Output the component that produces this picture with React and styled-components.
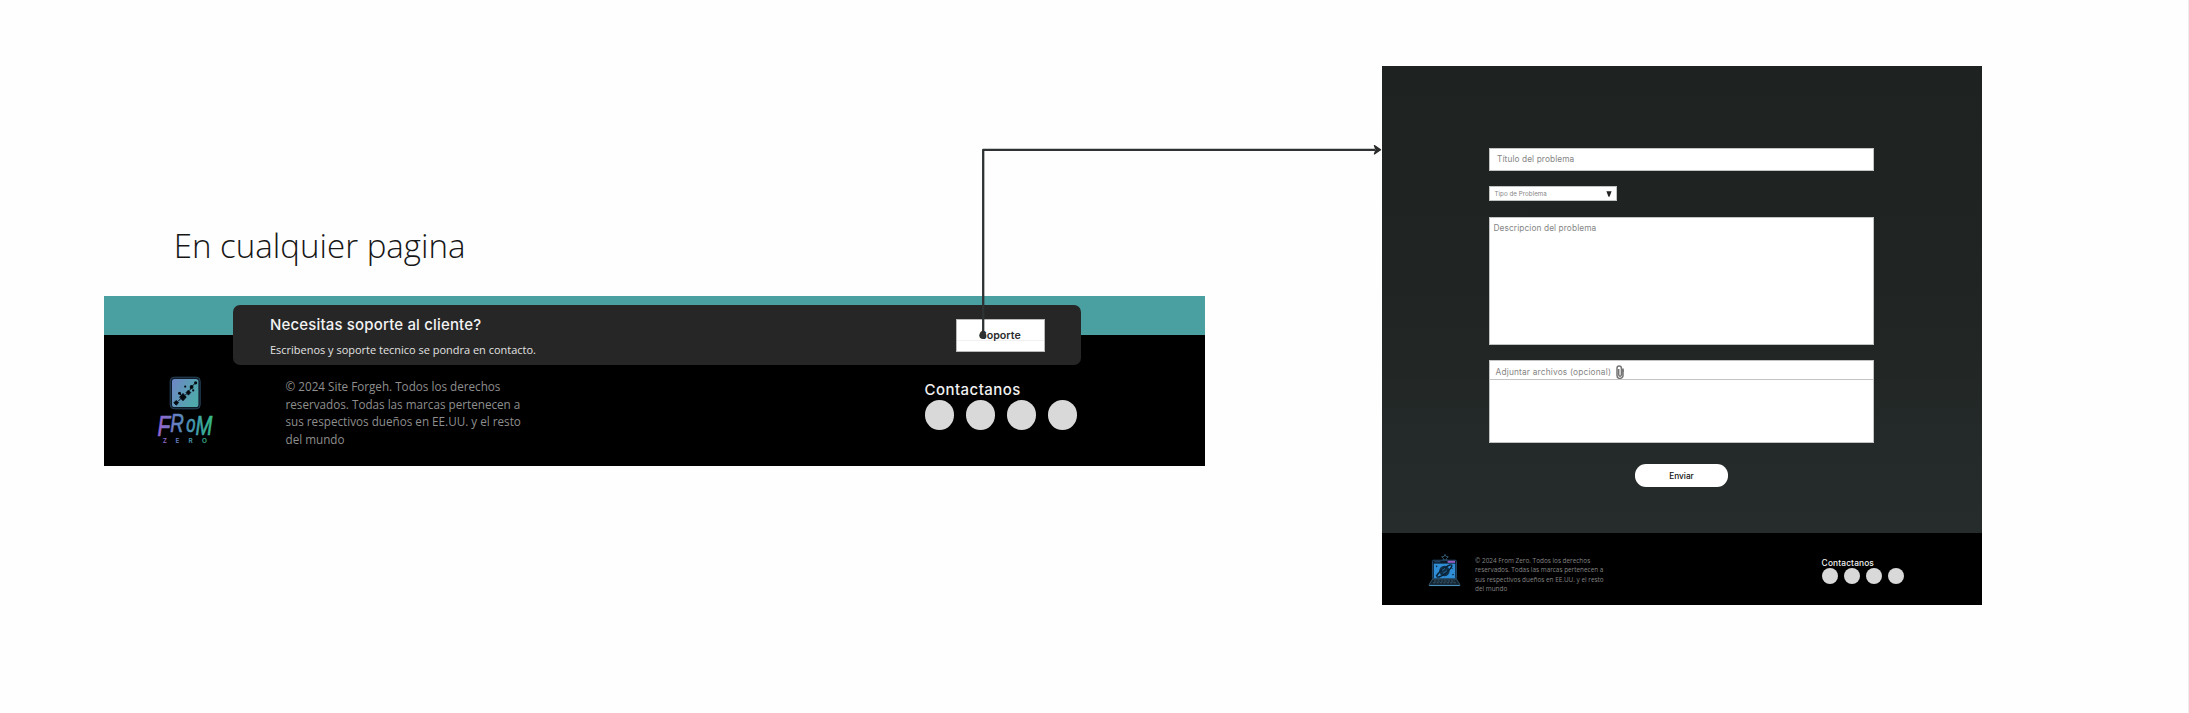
import React from 'react';
import styled, { createGlobalStyle } from 'styled-components';

const GlobalStyle = createGlobalStyle`
  *, *::before, *::after { box-sizing: border-box; }
  body { margin: 0; background: #fff; }
`;

const sans = '"Open Sans", "Noto Sans", sans-serif';
const geo = 'Inter, "Open Sans", sans-serif';

/* ---------- board ---------- */

const Board = styled.main`
  position: relative;
  width: 2189px;
  height: 713px;
  overflow: hidden;
  background: #fefefe;
  border-right: 1px solid #ededed;
`;

const BoardLabel = styled.h1`
  position: absolute;
  left: 173.7px;
  top: 224.2px;
  margin: 0;
  font: 300 33.1px/44px ${sans};
  color: #161616;
  white-space: nowrap;
`;

const Connector = styled.svg`
  position: absolute;
  left: 970px;
  top: 140px;
  width: 420px;
  height: 210px;
`;

/* ---------- shared footer parts ---------- */

const Copyright = styled.p`
  margin: 0;
  font-family: ${sans};
  font-size: ${(p) => p.$size}px;
  line-height: ${(p) => p.$line}px;
  color: ${(p) => p.$color};
  white-space: nowrap;
`;

const Contact = styled.div`
  display: flex;
  flex-direction: column;
  gap: ${(p) => (p.$small ? 0.2 : 0.8)}px;
`;

const ContactTitle = styled.span`
  font: 500 ${(p) => (p.$small ? '8.4px/10px' : '15px/18px')} ${geo};
  letter-spacing: ${(p) => (p.$small ? 0.13 : 0.45)}px;
  color: #f1f1f1;
`;

const Dots = styled.div`
  display: flex;
  gap: ${(p) => (p.$small ? 6.1 : 11.5)}px;
`;

const Dot = styled.span`
  width: ${(p) => (p.$small ? 16 : 29.5)}px;
  height: ${(p) => (p.$small ? 16 : 29.8)}px;
  border-radius: 50%;
  background: #d9d9d9;
`;

/* ---------- page footer with support card ---------- */

const FooterFrame = styled.section`
  position: absolute;
  left: 104px;
  top: 296px;
  width: 1101px;
  height: 170px;
  padding-top: 9.3px;
  background: linear-gradient(#4a9fa1 0 39.3px, #000 39.3px);
`;

const SupportCard = styled.div`
  display: flex;
  align-items: center;
  justify-content: space-between;
  width: 848px;
  height: 60px;
  margin-left: 129px;
  padding: 0 36.5px 0 37px;
  border-radius: 7px;
  background: #262626;
`;

const SupportText = styled.div`
  display: flex;
  flex-direction: column;
  gap: 7px;
  padding-top: 3px;
`;

const SupportTitle = styled.h2`
  margin: 0;
  font: 500 15px/20px ${geo};
  letter-spacing: 0.16px;
  color: #f3f3f3;
`;

const SupportHint = styled.p`
  margin: 0;
  font: 400 10.97px/16px ${sans};
  color: #e2e2e2;
`;

const SupportButton = styled.button`
  width: 88.5px;
  height: 33.5px;
  padding: 1.4px 0 0;
  border: 1px solid #b9b9b9;
  background: linear-gradient(#fff 0 20px, #f1f1f1 20px 21px, #fff 21px);
  font: 600 10.7px/14px ${geo};
  color: #2c2c2c;
`;

const FooterRow = styled.div`
  display: flex;
  align-items: flex-start;
  padding: 0 123.5px 0 48px;
`;

const BrandLogo = styled.svg`
  width: 66px;
  height: 74px;
  margin: 6.7px 67.5px 0 0;
  overflow: visible;
`;

const FooterCopy = styled.div`
  padding-top: 12.9px;
`;

const ContactSlot = styled.div`
  margin-left: auto;
  width: 157px;
  padding-top: 15.9px;
`;

/* ---------- report form ---------- */

const FormFrame = styled.section`
  position: absolute;
  left: 1382px;
  top: 66px;
  width: 599.5px;
  height: 539px;
  display: flex;
  flex-direction: column;
`;

const FormBody = styled.form`
  display: flex;
  flex-direction: column;
  height: 467px;
  padding: 82px 107.5px 0 107px;
  background: linear-gradient(#1e2221, #202423 45%, #262c2c);
`;

const FieldBox = styled.div`
  display: flex;
  border: 1px solid #c2c4c3;
  background: #fff;
  font: 400 8.3px/12px ${geo};
  letter-spacing: 0.1px;
  color: #858585;
`;

const TitleField = styled(FieldBox)`
  height: 22.5px;
  align-items: center;
  padding-left: 7px;
`;

const SelectField = styled(FieldBox)`
  width: 128px;
  height: 15px;
  margin-top: 15.7px;
  align-items: center;
  justify-content: space-between;
  padding: 0 4px 0 4.5px;
  font-size: 6.2px;
  letter-spacing: 0.05px;
`;

const DescriptionField = styled(FieldBox)`
  height: 128px;
  margin-top: 15.6px;
  padding: 4.5px 0 0 3.5px;
`;

const AttachField = styled(FieldBox)`
  flex-direction: column;
  height: 82.6px;
  margin-top: 15.6px;
`;

const AttachHeader = styled.div`
  display: flex;
  align-items: center;
  gap: 5.2px;
  height: 19px;
  padding: 2.6px 0 0 5.5px;
  border-bottom: 1px solid #c4c4c4;
  letter-spacing: 0.19px;
`;

const SendButton = styled.button`
  align-self: center;
  width: 92.5px;
  height: 22.5px;
  margin-top: 21.3px;
  padding: 0;
  border: 0;
  border-radius: 11px;
  background: #fff;
  font: 500 8.3px/12px ${geo};
  color: #111;
`;

const FormFooter = styled.footer`
  display: flex;
  align-items: flex-start;
  flex: 1;
  padding: 0 77.5px 0 43px;
  background: #000;
`;

const LaptopLogo = styled.svg`
  width: 42px;
  height: 42px;
  margin: 17px 8px 0 0;
`;

const FormCopy = styled.div`
  padding-top: 22.9px;
`;

const FormContactSlot = styled.div`
  margin-left: auto;
  width: 82.4px;
  padding-top: 25px;
`;

/* ---------- drawings ---------- */

const FromZeroLogo = () => (
  <BrandLogo viewBox="0 0 66 74">
    <defs>
      <linearGradient id="tile" x1="0" y1="0" x2="1" y2="0.5">
        <stop offset="0" stopColor="#6f86c6" />
        <stop offset="1" stopColor="#4fa9ab" />
      </linearGradient>
      <linearGradient id="word" x1="0" y1="0" x2="1" y2="0">
        <stop offset="0" stopColor="#9a62cf" />
        <stop offset="0.4" stopColor="#5c86bf" />
        <stop offset="0.7" stopColor="#429fae" />
        <stop offset="1" stopColor="#35bd84" />
      </linearGradient>
    </defs>
    <rect x="18.2" y="5.2" width="30" height="31.6" rx="4" fill="#101b2a" stroke="#28465c" strokeWidth="1" />
    <rect x="20" y="7" width="26.4" height="28" rx="2.6" fill="url(#tile)" />
    <g fill="#050a10">
      <path d="M31 21.5l3.2 3.6-3.2 3.6-3.4-3.6z" stroke="#050a10" strokeWidth="1" />
      <path d="M24.2 28.4l2.4 2.4-2.4 2.4-2.4-2.4z" stroke="#050a10" strokeWidth="0.8" />
      <path d="M36.4 18l2.4 2.6-2.4 2.6-2.4-2.6z" stroke="#050a10" strokeWidth="0.6" />
      <circle cx="39.6" cy="15" r="1.9" />
      <circle cx="27.5" cy="21.3" r="1.5" />
      <circle cx="33.2" cy="14.6" r="1.1" />
      <circle cx="43.6" cy="10.8" r="1.6" />
      <circle cx="41.2" cy="18.4" r="1.1" />
      <path d="M26 29.4l3-3M33 23.4l2-2M37.6 18.4l1.6-2.4M40.6 13.8l2-2M28 22l2 2" stroke="#050a10" strokeWidth="1" />
    </g>
    <text
      transform="scale(0.72 1)"
      fill="url(#word)"
      stroke="url(#word)"
      strokeWidth="0.7"
      fontFamily='"Liberation Sans", sans-serif'
      fontStyle="italic"
    >
      <tspan x="7.5" y="64" fontSize="29">F</tspan>
      <tspan x="25.5" y="60.5" fontSize="26">R</tspan>
      <tspan x="47.5" y="60" fontSize="23">o</tspan>
      <tspan x="60.5" y="63.5" fontSize="28">M</tspan>
    </text>
    <text fill="url(#word)" fontFamily="Inter, sans-serif" fontWeight="600" fontSize="6.4">
      <tspan x="10.8" y="71">Z</tspan>
      <tspan x="23.4" y="71">E</tspan>
      <tspan x="36.4" y="71">R</tspan>
      <tspan x="50" y="71">O</tspan>
    </text>
  </BrandLogo>
);

const LaptopMark = () => (
  <LaptopLogo viewBox="0 0 42 42">
    <path d="M20 4.4l1 2.1 2.3.3-1.7 1.6.4 2.3-2-1.1-2 1.1.4-2.3-1.7-1.6 2.3-.3z" fill="none" stroke="#3d6a86" strokeWidth="0.8" />
    <rect x="7.4" y="10.2" width="24" height="18.8" rx="1.2" fill="#0c1a2a" stroke="#2c5c80" strokeWidth="0.8" />
    <rect x="8.8" y="13.6" width="21.4" height="14.6" fill="#2f8ed6" />
    <rect x="22.6" y="10.8" width="7.4" height="2" fill="#9a62c8" />
    <path d="M9.4 11.8h6" stroke="#2a5e90" strokeWidth="0.8" />
    <circle cx="19.4" cy="21" r="5.2" fill="#10304a" />
    <ellipse cx="19.4" cy="21" rx="9.4" ry="2.4" transform="rotate(-38 19.4 21)" fill="none" stroke="#0b2034" strokeWidth="1.3" />
    <path d="M17 20.4l3-2M18 23.4l4-2.6" stroke="#2f7fb8" strokeWidth="0.7" />
    <g fill="#0c2a44">
      <circle cx="11.6" cy="16.4" r="0.8" />
      <circle cx="28" cy="24.6" r="0.8" />
      <circle cx="11.4" cy="25.4" r="0.7" />
      <circle cx="27.2" cy="18.6" r="0.6" />
    </g>
    <path d="M7.6 29h23.8l3.4 5.4v1.2H4.2v-1.2z" fill="#13222e" stroke="#39627d" strokeWidth="0.8" />
    <path d="M9 31h21M8 32.8h23.4" stroke="#47718a" strokeWidth="0.7" strokeDasharray="2.4 1" />
    <path d="M4.4 35.4h30.2" stroke="#4f9ac8" strokeWidth="1" />
  </LaptopLogo>
);

const Clip = () => (
  <svg width="8" height="14" viewBox="0 0 8 14" fill="none" stroke="#747474" strokeWidth="1.5">
    <path d="M1 4v6.4a3 3 0 0 0 6 0V3.6M1 4.4V3.2a2.2 2.2 0 0 1 4.4 0v6.6a1.3 1.3 0 0 1-2.7 0V4" />
    <path d="M7 7V4.4" />
  </svg>
);

const Caret = () => (
  <svg width="6" height="6" viewBox="0 0 6 6">
    <path d="M0.4 0.3h5.2L3.5 5.7h-1z" fill="#222" />
  </svg>
);

const ContactBlock = ({ small }) => (
  <Contact $small={small}>
    <ContactTitle $small={small}>Contactanos</ContactTitle>
    <Dots $small={small}>
      {[0, 1, 2, 3].map((n) => (
        <Dot key={n} $small={small} />
      ))}
    </Dots>
  </Contact>
);

export default function App() {
  return (
    <Board>
      <GlobalStyle />
      <BoardLabel>En cualquier pagina</BoardLabel>

      <FooterFrame>
        <SupportCard>
          <SupportText>
            <SupportTitle>Necesitas soporte al cliente?</SupportTitle>
            <SupportHint>Escribenos y soporte tecnico se pondra en contacto.</SupportHint>
          </SupportText>
          <SupportButton type="button">Soporte</SupportButton>
        </SupportCard>
        <FooterRow>
          <FromZeroLogo />
          <FooterCopy>
            <Copyright $size={11.7} $line={17.6} $color="#8e8e8e">
              © 2024 Site Forgeh. Todos los derechos<br />
              reservados. Todas las marcas pertenecen a<br />
              sus respectivos dueños en EE.UU. y el resto<br />
              del mundo
            </Copyright>
          </FooterCopy>
          <ContactSlot>
            <ContactBlock />
          </ContactSlot>
        </FooterRow>
      </FooterFrame>

      <FormFrame>
        <FormBody>
          <TitleField>Título del problema</TitleField>
          <SelectField>
            Tipo de Problema
            <Caret />
          </SelectField>
          <DescriptionField>Descripcion del problema</DescriptionField>
          <AttachField>
            <AttachHeader>
              Adjuntar archivos (opcional)
              <Clip />
            </AttachHeader>
          </AttachField>
          <SendButton type="button">Enviar</SendButton>
        </FormBody>
        <FormFooter>
          <LaptopMark />
          <FormCopy>
            <Copyright $size={6.4} $line={9.4} $color="#858585">
              © 2024 From Zero. Todos los derechos<br />
              reservados. Todas las marcas pertenecen a<br />
              sus respectivos dueños en EE.UU. y el resto<br />
              del mundo
            </Copyright>
          </FormCopy>
          <FormContactSlot>
            <ContactBlock small />
          </FormContactSlot>
        </FormFooter>
      </FormFrame>

      <Connector viewBox="0 0 420 210">
        <path d="M13.2 194V9.8H405" fill="none" stroke="#2f3232" strokeWidth="2.3" strokeLinejoin="round" />
        <path d="M404.4 5.6l6.2 4.2-6.2 4.2 1.6-4.2z" fill="#2b2d2d" stroke="#2b2d2d" strokeWidth="1.2" strokeLinejoin="round" />
        <path d="M12.9 190.4c2 1.2 3.4 2.8 3.4 4.8a3.5 3.5 0 0 1-7 0c0-2 1.6-3.6 3.6-4.8z" fill="#2f3232" />
      </Connector>
    </Board>
  );
}
